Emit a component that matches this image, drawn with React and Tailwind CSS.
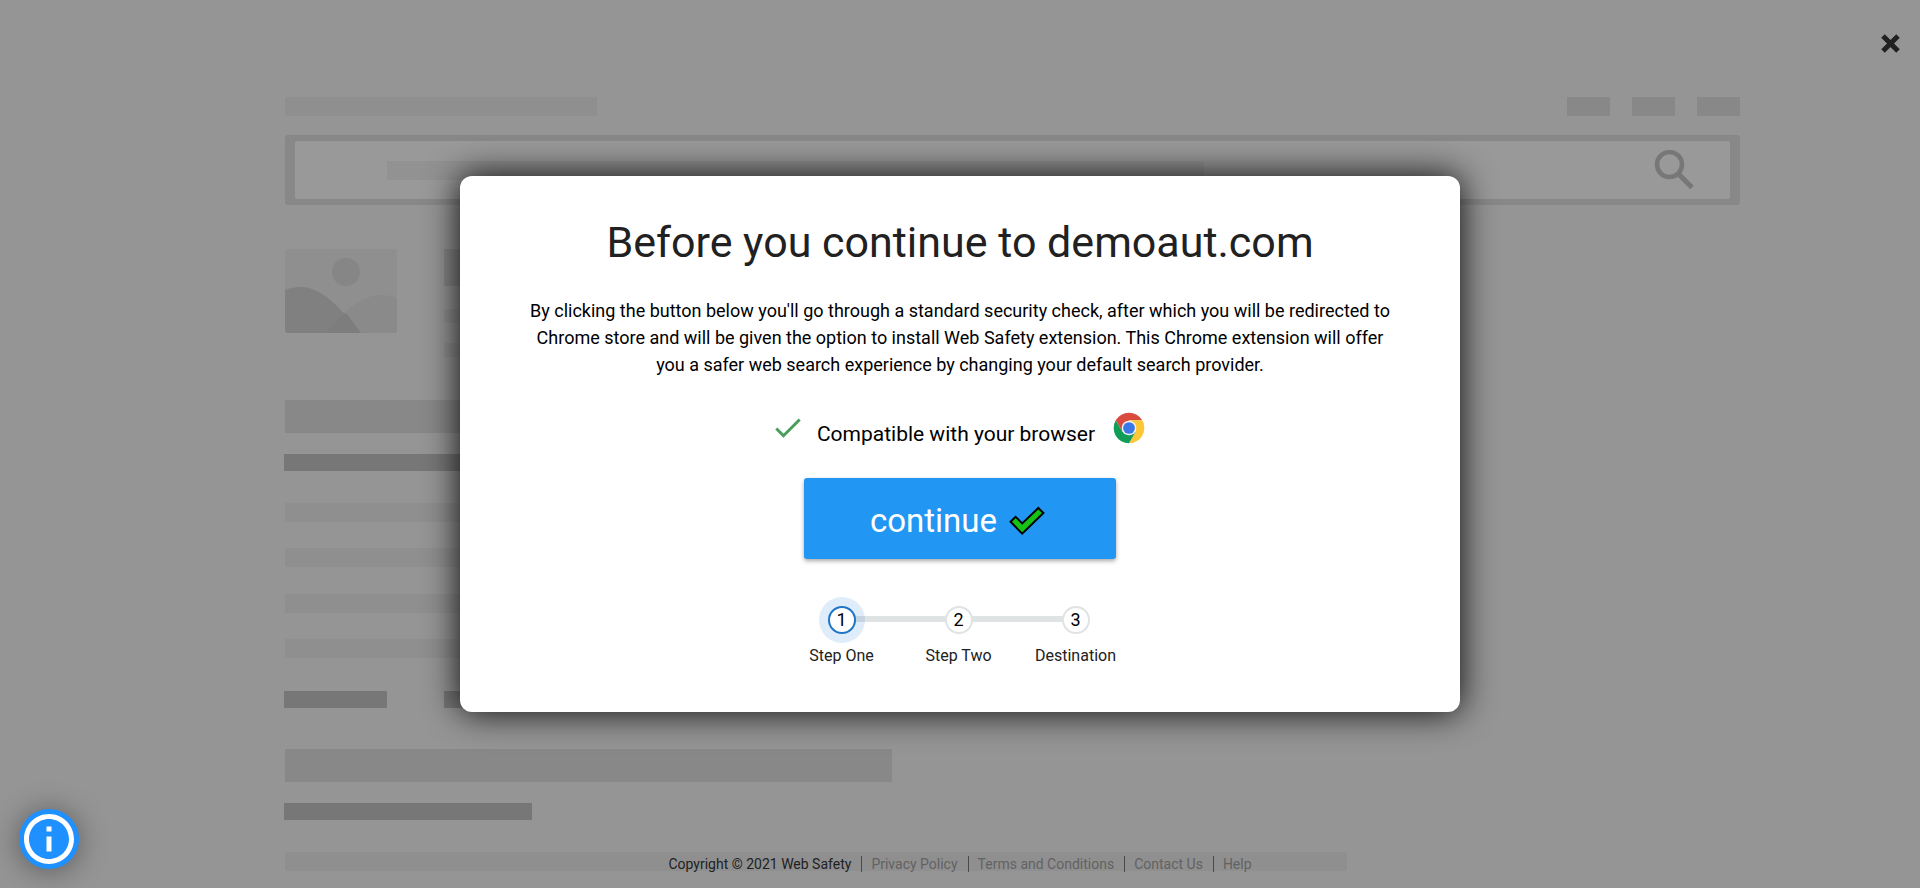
import React from "react";

function Bar({ className }) {
  return <div className={className} />;
}

function Backdrop() {
  return (
    <div aria-hidden="true" className="flex flex-col items-start pt-[97px] pr-[180px] pb-4 pl-[285px]">
      <div className="flex w-full justify-between">
        <Bar className="h-[19px] w-[312px] bg-[#8f8f8f]" />
        <div className="flex gap-[22px]">
          <Bar className="h-[19px] w-[43px] bg-[#888888]" />
          <Bar className="h-[19px] w-[43px] bg-[#888888]" />
          <Bar className="h-[19px] w-[43px] bg-[#888888]" />
        </div>
      </div>

      <div className="mt-[19px] w-full rounded-[3px] bg-[#888888] px-[10px] py-[6px]">
        <div className="flex h-[58px] items-center justify-between rounded-[2px] bg-[#999999] pr-[36px] pl-[92px]">
          <Bar className="h-[19px] w-[817px] bg-[#929292]" />
          <svg width="40" height="40" viewBox="0 0 40 40" fill="none" stroke="#777777">
            <circle cx="15.5" cy="14.5" r="12.5" strokeWidth="4.5" />
            <path d="M25.500 25L38 37.500" strokeWidth="5" />
          </svg>
        </div>
      </div>

      <div className="mt-11 flex gap-[47px]">
        <svg className="rounded-[3px]" width="112" height="84" viewBox="0 0 112 84">
          <rect width="112" height="84" fill="#8f8f8f" />
          <circle cx="61" cy="23" r="14" fill="#868686" />
          <path d="M41 84C58 62 78 46 96 46C102 46 107 47 112 49V84Z" fill="#8a8a8a" />
          <path d="M0 41C5 39 10 38 16 38C40 38 60 66 76 84H0Z" fill="#808080" />
          <path d="M41 84C48 75 55 68 61 64C66 70 71 78 76 84Z" fill="#7d7d7d" />
        </svg>
        <div className="flex flex-col">
          <Bar className="h-[37px] w-[400px] bg-[#888888]" />
          <Bar className="mt-[23px] h-[14px] w-[500px] bg-[#8f8f8f]" />
          <Bar className="mt-5 h-[14px] w-[500px] bg-[#8f8f8f]" />
        </div>
      </div>

      <Bar className="mt-[43px] h-[33px] w-[607px] bg-[#888888]" />
      <Bar className="mt-[21px] -ml-px h-[17px] w-[248px] bg-[#777777]" />
      <Bar className="mt-8 h-[19px] w-[1062px] bg-[#8f8f8f]" />
      <Bar className="mt-[26px] h-[19px] w-[1062px] bg-[#8f8f8f]" />
      <Bar className="mt-[27px] h-[19px] w-[1062px] bg-[#8f8f8f]" />
      <Bar className="mt-[26px] h-[19px] w-[1062px] bg-[#8f8f8f]" />
      <div className="mt-[33px] -ml-px flex gap-[57px]">
        <Bar className="h-[17px] w-[103px] bg-[#777777]" />
        <Bar className="h-[17px] w-[103px] bg-[#777777]" />
      </div>
      <Bar className="mt-[41px] h-[33px] w-[607px] bg-[#888888]" />
      <Bar className="mt-[21px] -ml-px h-[17px] w-[248px] bg-[#777777]" />
      <Bar className="mt-8 h-[19px] w-[1062px] bg-[#8f8f8f]" />
    </div>
  );
}

function ChromeLogo() {
  return (
    <svg width="34" height="32" viewBox="-3 0 51 48" role="img" aria-label="Chrome">
      <path d="M4.1 12.500A23 23 0 0 1 43.900 12.500H24L14 29.750Z" fill="#db4a3e" />
      <path d="M43.900 12.500A23 23 0 0 1 24 47L34 29.750L24 12.500Z" fill="#fcc737" />
      <path d="M4.100 12.500L14.100 29.750L24 35L33.900 29.750L24 47A23 23 0 0 1 4.100 12.500Z" fill="#109d58" />
      <circle cx="24" cy="24" r="11" fill="#f1f1f1" />
      <circle cx="24" cy="24" r="8.8" fill="#3b78e7" />
    </svg>
  );
}

const steps = [
  { n: 1, label: "Step One", active: true },
  { n: 2, label: "Step Two" },
  { n: 3, label: "Destination" },
];

function Stepper() {
  return (
    <ol className="mt-[47px] mr-[3px] flex">
      {steps.map((s, i) => (
        <li key={s.n} className="relative flex w-[117px] flex-col items-center">
          {i < steps.length - 1 && (
            <span className="absolute top-[10px] left-1/2 h-[6px] w-full bg-[#e0e3e3]" />
          )}
          <span
            className={
              s.active
                ? "relative flex size-7 items-center justify-center rounded-full border-2 border-[#1f76c6] bg-white text-lg leading-6 text-black shadow-[0_0_0_9px_rgba(25,118,210,0.14)]"
                : "relative z-10 flex size-7 items-center justify-center rounded-full border-2 border-[#e0e3e3] bg-white text-lg leading-6 text-black"
            }
          >
            {s.n}
          </span>
          <span className="mt-[10px] text-base leading-6 whitespace-nowrap text-[#212121]">{s.label}</span>
        </li>
      ))}
    </ol>
  );
}

function Dialog() {
  return (
    <section
      role="dialog"
      aria-labelledby="dialog-title"
      className="flex w-full max-w-[1000px] flex-col items-center rounded-xl bg-white px-16 pt-[38px] pb-11 shadow-[0_0_35px_rgba(0,0,0,0.95)]"
    >
      <h1 id="dialog-title" className="text-[43px] leading-[56px] text-[#212121]">
        Before you continue to demoaut.com
      </h1>
      <p className="mt-[27px] text-center text-lg leading-[27px] text-black">
        By clicking the button below you'll go through a standard security check, after which you will be redirected to
        Chrome store and will be given the option to install Web Safety extension. This Chrome extension will offer you
        a safer web search experience by changing your default search provider.
      </p>
      <div className="mt-[34px] flex h-8 gap-4">
        <svg className="mt-[6px]" width="26" height="20" viewBox="0 0 26 20" fill="none" stroke="#4a9e5c" strokeWidth="3">
          <path d="M1.300 10.500L8.500 17.700L24.700 1.500" />
        </svg>
        <span className="mt-[10px] text-[21px] leading-6 text-black">Compatible with your browser</span>
        <ChromeLogo />
      </div>
      <button
        type="button"
        className="mt-[34px] flex h-[81px] w-[312px] items-center justify-center gap-3 rounded-[3px] bg-[#2196f3] pt-1 pr-[5px] text-[33px] leading-10 text-white shadow-[0_2px_4px_rgba(0,0,0,0.35)]"
      >
        continue
        <svg width="36" height="30" viewBox="0 0 36 30" fill="#15c215" stroke="#000" strokeWidth="2">
          <path d="M1.600 15.800L6.600 10.800L13.200 17.400L29.300 2L34.400 7L13.200 27.700Z" />
        </svg>
      </button>
      <Stepper />
    </section>
  );
}

function Footer() {
  const link = "border-l border-[#4a4a4a] pl-[9px] text-[#626262]";
  return (
    <footer className="absolute inset-x-0 bottom-4 flex justify-center gap-[10px] text-sm leading-4 text-[#212121]">
      <span>Copyright © 2021 Web Safety</span>
      <a href="#privacy" className={link}>Privacy Policy</a>
      <a href="#terms" className={link}>Terms and Conditions</a>
      <a href="#contact" className={link}>Contact Us</a>
      <a href="#help" className={link}>Help</a>
    </footer>
  );
}

export default function App() {
  return (
    <div className="relative min-h-screen overflow-hidden bg-[#959595] font-[Roboto,sans-serif]">
      <Backdrop />
      <main className="absolute inset-0 flex items-center justify-center">
        <Dialog />
      </main>
      <button type="button" aria-label="Close" className="absolute top-[34px] right-5">
        <svg width="19" height="19" viewBox="0 0 19 19" stroke="#212121" strokeWidth="5">
          <path d="M2 2L17 17M17 2L2 17" />
        </svg>
      </button>
      <Footer />
      <button
        type="button"
        aria-label="Information"
        className="absolute bottom-[19px] left-[19px] rounded-full bg-[#1e90ff] shadow-[0_2px_30px_rgba(0,0,0,0.4)]"
      >
        <svg width="60" height="60" viewBox="0 0 24 24" fill="#fff">
          <path d="M11 17h2v-6h-2v6zm1-15C6.480 2 2 6.480 2 12s4.480 10 10 10 10-4.480 10-10S17.520 2 12 2zm0 18c-4.410 0-8-3.590-8-8s3.590-8 8-8 8 3.590 8 8-3.590 8-8 8zM11 9h2V7h-2v2z" />
        </svg>
      </button>
    </div>
  );
}
